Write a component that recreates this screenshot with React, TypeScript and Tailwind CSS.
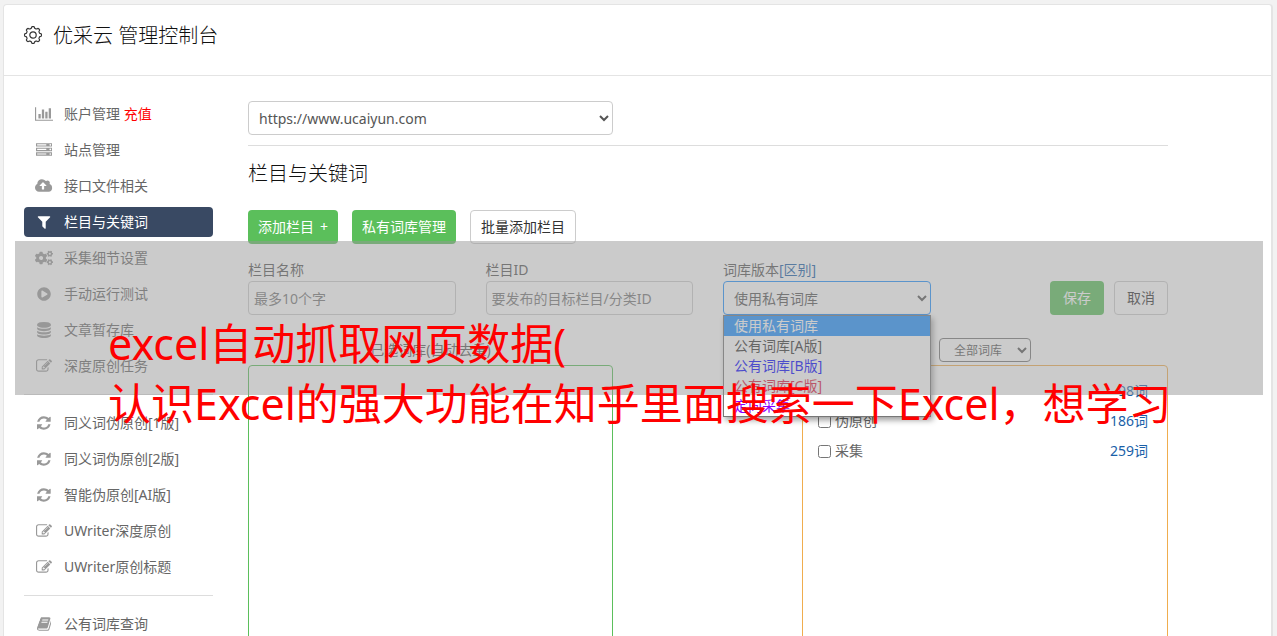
import React from "react";
import { FaCogs, FaPlayCircle } from "react-icons/fa";

const glyphs: Record<string, { box: string; d: string }> = {
  chart: {
    box: "0 0 2048 1792",
    d: "M640 896v512H384V896h256zm384-512v1024H768V384h256zm1024 1152v128H0V128h128v1408h1920zm-640-896v768h-256V640h256zm384-384v1152h-256V256h256z",
  },
  server: {
    box: "0 0 1792 1792",
    d: "M128 1408h1024v-128H128v128zm0-512h1024V768H128v128zm1568 448q0-40-28-68t-68-28-68 28-28 68 28 68 68 28 68-28 28-68zM128 384h1024V256H128v128zm1568 448q0-40-28-68t-68-28-68 28-28 68 28 68 68 28 68-28 28-68zm0-512q0-40-28-68t-68-28-68 28-28 68 28 68 68 28 68-28 28-68zm96 832v384H0v-384h1792zm0-512v384H0V640h1792zm0-512v384H0V128h1792z",
  },
  cloud: {
    box: "0 0 1920 1792",
    d: "M1280 864q0-14-9-23L919 489q-9-9-23-9t-23 9L522 840q-10 12-10 24 0 14 9 23t23 9h224v352q0 13 9.5 22.5t22.5 9.5h192q13 0 22.5-9.5t9.5-22.5V896h224q13 0 22.5-9.5t9.5-22.5zm640 288q0 159-112.5 271.5T1536 1536H448q-185 0-316.5-131.5T0 1088q0-130 70-240t188-165q-2-30-2-43 0-212 150-362t362-150q156 0 285.5 87T1242 346q71-62 166-62 106 0 181 75t75 181q0 76-41 138 130 31 213.5 135.5T1920 1152z",
  },
  filter: {
    box: "0 0 1792 1792",
    d: "M1595 295q17 41-14 70l-493 493v742q0 42-39 59-13 5-25 5-27 0-45-19l-256-256q-19-19-19-45V858L211 365q-31-29-14-70 17-39 59-39h1280q42 0 59 39z",
  },
  database: {
    box: "0 0 1792 1792",
    d: "M896 768q237 0 443-43t325-127v170q0 69-103 128t-280 93.5-385 34.5-385-34.5T231 896 128 768V598q119 84 325 127t443 43zm0 768q237 0 443-43t325-127v170q0 69-103 128t-280 93.5-385 34.5-385-34.5-280-93.5-103-128v-170q119 84 325 127t443 43zm0-384q237 0 443-43t325-127v170q0 69-103 128t-280 93.5-385 34.5-385-34.5-280-93.5-103-128V982q119 84 325 127t443 43zM896 0q208 0 385 34.5t280 93.5 103 128v128q0 69-103 128t-280 93.5T896 640t-385-34.5T231 512 128 384V256q0-69 103-128t280-93.5T896 0z",
  },
  edit: {
    box: "0 0 1792 1792",
    d: "M888 1184l116-116-152-152-116 116v56h96v96h56zm440-720q-16-16-33 1L945 815q-17 17-1 33t33-1l350-350q17-17 1-33zm80 594v190q0 119-84.5 203.5T1120 1536H288q-119 0-203.5-84.5T0 1248V416q0-119 84.5-203.5T288 128h832q63 0 117 25 15 7 18 23 3 17-9 29l-49 49q-14 14-32 8-23-6-45-6H288q-66 0-113 47t-47 113v832q0 66 47 113t113 47h832q66 0 113-47t47-113v-126q0-13 9-22l64-64q15-15 35-7t20 29zm-96-738l288 288-672 672H640V992zm444 132l-92 92-288-288 92-92q28-28 68-28t68 28l152 152q28 28 28 68t-28 68z",
  },
  refresh: {
    box: "0 -128 1536 1792",
    d: "M1511 928q0 5-1 7-64 268-268 434.5T764 1536q-146 0-282.5-55T238 1324l-129 129q-19 19-45 19t-45-19-19-45V960q0-26 19-45t45-19h448q26 0 45 19t19 45-19 45l-137 137q71 66 161 102t187 36q134 0 250-65t186-179q11-17 53-117 8-23 30-23h192q13 0 22.500 9.500t9.500 22.500zm25-800v448q0 26-19 45t-45 19h-448q-26 0-45-19t-19-45 19-45l138-138Q969 256 768 256q-134 0-250 65T332 500q-11 17-53 117-8 23-30 23H50q-13 0-22.500-9.500T18 608v-7q65-268 270-434.500T768 0q146 0 284 55.500T1297 212l130-129q19-19 45-19t45 19 19 45z",
  },
  book: {
    box: "0 0 1664 1792",
    d: "M1639 478q40 57 18 129l-275 906q-19 64-76.5 107.5T1183 1664H260q-77 0-148.5-53.5T12 1479q-24-67-2-127 0-4 3-27t4-37q1-8-3-21.5t-3-19.5q2-11 8-21t16.5-23.5T52 1179q23-38 45-91.5t30-91.5q3-10 .5-30t-.5-28q3-11 17-28t17-23q21-36 42-92t25-90q1-9-2.5-32t.5-28q4-13 22-30.5t22-22.5q19-26 42.5-84.5T340 411q1-8-3-25.500t-2-26.500q2-8 9-18t18-23 17-21q8-12 16.500-30.500t15-35 16-36 19.500-32T469.500 140.500t36-11.500 47.500 5.500l-1 3q38-9 51-9h761q74 0 114 56t18 130l-274 906q-36 119-71.500 153.500t-128.500 34.500H152q-27 0-38 15-11 16-1 43 24 70 144 70h923q29 0 56-15.500t35-41.500l300-987q7-22 5-57 38 15 59 43zM575 480q-4 13 2 22.500t20 9.500h608q13 0 25.500-9.500T1247 480l21-64q4-13-2-22.500t-20-9.500H638q-13 0-25.500 9.500T596 416zm-83 256q-4 13 2 22.500t20 9.500h608q13 0 25.500-9.500t16.500-22.500l21-64q4-13-2-22.500t-20-9.500H555q-13 0-25.500 9.500T513 672z",
  },
};

function Glyph({ name }: { name: string }) {
  if (name === "cogs") return <FaCogs className="h-[18px] w-[18px]" />;
  if (name === "play") return <FaPlayCircle className="h-3.5 w-3.5" />;
  const g = glyphs[name];
  return (
    <svg viewBox={g.box} className="h-4 w-auto shrink-0" fill="currentColor" aria-hidden="true">
      <path d={g.d} />
    </svg>
  );
}

// Outline of a gear with eight rounded teeth, centred on (10, 10).
const gearPath =
  "M" +
  Array.from({ length: 160 }, (_, i) => {
    const a = (Math.PI * 2 * i) / 160;
    const r = 7.6 + 0.85 * Math.tanh(2.2 * Math.cos(8 * a));
    return `${(10 + r * Math.cos(a)).toFixed(2)} ${(10 + r * Math.sin(a)).toFixed(2)}`;
  }).join("L") +
  "Z";

function HeaderGear() {
  return (
    <svg viewBox="0 0 20 20" className="h-5 w-5" fill="none" stroke="currentColor" strokeWidth="1.2" strokeLinejoin="round" aria-hidden="true">
      <path d={gearPath} />
      <circle cx="10" cy="10" r="3.200" />
    </svg>
  );
}

type Item = { icon: string; label: string; extra?: string; active?: boolean };

const groups: Item[][] = [
  [
    { icon: "chart", label: "账户管理", extra: "充值" },
    { icon: "server", label: "站点管理" },
    { icon: "cloud", label: "接口文件相关" },
    { icon: "filter", label: "栏目与关键词", active: true },
    { icon: "cogs", label: "采集细节设置" },
    { icon: "play", label: "手动运行测试" },
    { icon: "database", label: "文章暂存库" },
    { icon: "edit", label: "深度原创任务" },
  ],
  [
    { icon: "refresh", label: "同义词伪原创[1版]" },
    { icon: "refresh", label: "同义词伪原创[2版]" },
    { icon: "refresh", label: "智能伪原创[AI版]" },
    { icon: "edit", label: "UWriter深度原创" },
    { icon: "edit", label: "UWriter原创标题" },
  ],
  [{ icon: "book", label: "公有词库查询" }],
];

function Sidebar() {
  return (
    <nav className="w-[189px] shrink-0 pt-[23px]">
      {groups.map((items, g) => (
        <ul key={g} className={g > 0 ? "mt-[13px] flex flex-col gap-1.5 border-t border-[#ddd] pt-[13px]" : "flex flex-col gap-1.5"}>
          {items.map((it) => (
            <li key={it.label}>
              <a
                href="#"
                className={
                  it.active
                    ? "flex h-[30px] items-center rounded bg-[#394963] pl-2.5 text-white"
                    : "flex h-[30px] items-center rounded pl-2.5 text-[#666]"
                }
              >
                <span className={it.active ? "flex w-5 justify-center" : "flex w-5 justify-center text-[#999]"}>
                  <Glyph name={it.icon} />
                </span>
                <span className="ml-2.5 whitespace-nowrap">
                  {it.label}
                  {it.extra && <span className="text-[#f00]"> {it.extra}</span>}
                </span>
              </a>
            </li>
          ))}
        </ul>
      ))}
    </nav>
  );
}

const menu = [
  { label: "使用私有词库", cls: "h-5 bg-[#1e90ff] pl-2.5 leading-5 text-white" },
  { label: "公有词库[A版]", cls: "h-5 pl-2.5 leading-5 text-[#333]" },
  { label: "公有词库[B版]", cls: "h-5 pl-2.5 leading-5 text-[#00f]" },
  { label: "公有词库[C版]", cls: "h-5 pl-2.5 leading-5 text-[#dc143c]" },
  { label: "定向采集", cls: "h-5 pl-2.5 leading-5 text-[#80f]" },
];

const words = [
  { label: "", count: "98词" },
  { label: "伪原创", count: "186词" },
  { label: "采集", count: "259词" },
];

const field = "mt-px h-[34px] w-full rounded border border-[#ccc] bg-white px-[5px] text-[#555] placeholder:text-[#777]";

export default function App() {
  return (
    <div className="relative h-screen overflow-hidden bg-[#f2f2f2] pt-1 pr-1 pl-[3px] font-['Noto_Sans','Noto_Sans_CJK_SC',sans-serif] text-sm leading-5 text-[#333]">
      <div className="min-h-full rounded-t border border-r-2 border-[#e4e4e4] bg-white">
        <header className="flex h-[71px] items-start gap-2.5 border-b border-[#e4e4e4] pt-4 pl-[19px]">
          <span className="pt-1">
            <HeaderGear />
          </span>
          <h1 className="text-xl leading-[30px] font-light text-[#111]">优采云 管理控制台</h1>
        </header>

        <div className="flex gap-[35px] pr-[103px] pl-5">
          <Sidebar />

          <main className="min-w-0 flex-1 pt-[25px]">
            <select aria-label="https://www.ucaiyun.com" className="h-[34px] w-[365px] rounded border border-[#ccc] bg-white px-1.5 text-[#555]">
              <option>https://www.ucaiyun.com</option>
            </select>
            <hr className="mt-2.5 border-[#ddd]" />
            <h2 className="mt-[13px] text-xl leading-[30px] font-light text-[#111]">栏目与关键词</h2>

            <div className="mt-[21px] flex gap-3.5">
              <button className="flex h-[34px] w-[90px] items-center justify-center gap-1.5 rounded bg-[#5bbf5b] text-white">
                <span>添加栏目</span>
                <span>+</span>
              </button>
              <button className="h-[34px] w-[104px] rounded bg-[#5bbf5b] text-white">私有词库管理</button>
              <button className="h-[34px] w-[106px] rounded border border-[#ccc] bg-white">批量添加栏目</button>
            </div>

            <div className="mt-4 grid grid-cols-4 gap-[30px]">
              <label className="block">
                <span className="block text-[#555]">栏目名称</span>
                <input className={field} placeholder="最多10个字" />
              </label>
              <label className="block">
                <span className="block text-[#555]">栏目ID</span>
                <input className={field} placeholder="要发布的目标栏目/分类ID" />
              </label>
              <div className="relative">
                <label htmlFor="version" className="text-[#555]">
                  词库版本
                  <a href="#" className="text-[#1a5fa8]">
                    [区别]
                  </a>
                </label>
                <select id="version" className="mt-px block h-[34px] w-full rounded border border-[#1e90ff] bg-white px-1.5 text-[#555]">
                  <option>使用私有词库</option>
                </select>
                <ul className="absolute top-[55px] left-0 z-10 w-full border border-[#777] bg-white shadow-[2px_3px_6px_rgba(0,0,0,0.4)]">
                  {menu.map((m) => (
                    <li key={m.label} className={m.cls}>
                      {m.label}
                    </li>
                  ))}
                </ul>
              </div>
              <div className="flex items-end justify-end gap-2.5">
                <button className="h-[34px] w-[54px] rounded bg-[#5bbf5b] text-white">保存</button>
                <button className="h-[34px] w-[54px] rounded border border-[#ccc] bg-white">取消</button>
              </div>
            </div>

            <div className="mt-[23px] flex justify-between">
              <section className="w-[365px]">
                <h3 className="flex h-[27px] items-center justify-center pb-1 text-[#555]">已选词库(自动去重)</h3>
                <div className="h-[400px] rounded border border-[#5bbf5b]" />
              </section>
              <section className="w-[366px]">
                <div className="flex h-[27px] items-start justify-center">
                  <select aria-label="全部词库" className="h-6 w-[92px] rounded border border-[#767676] bg-white px-2.5 text-xs text-[#555]">
                    <option>全部词库</option>
                  </select>
                </div>
                <div className="h-[400px] rounded border border-[#f0ad4e] pt-2.5 pr-[19px] pl-[15px]">
                  {words.map((w) => (
                    <label key={w.count} className="flex h-[30px] items-center text-[#666]">
                      <input type="checkbox" className="mr-1 h-[13px] w-[13px]" />
                      {w.label}
                      <span className="ml-auto text-[#1a5fa8]">{w.count}</span>
                    </label>
                  ))}
                </div>
              </section>
            </div>
          </main>
        </div>
      </div>

      <div className="pointer-events-none absolute top-[241px] right-3.5 left-[15px] z-20 h-[154px] bg-[#979797]/50" />
      <p className="pointer-events-none absolute top-[314px] left-[108px] z-30 text-[43px] leading-[60px] whitespace-nowrap text-[#f00]">
        excel自动抓取网页数据(
        <br />
        认识Excel的强大功能在知乎里面搜索一下Excel，想学习
      </p>
    </div>
  );
}
